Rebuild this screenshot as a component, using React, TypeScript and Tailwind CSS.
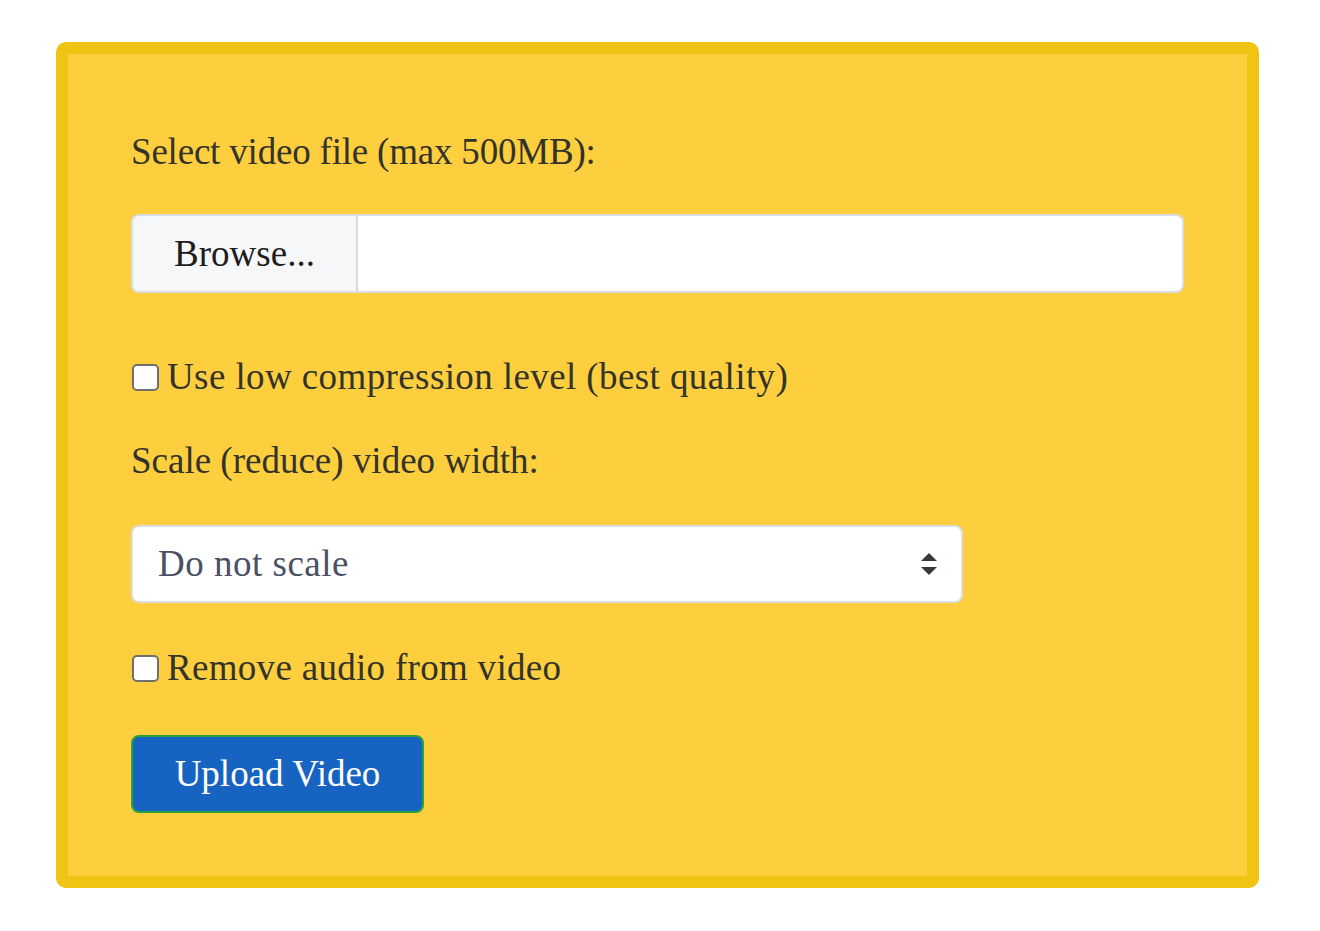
import { useState } from 'react'

function Check({ label }: { label: string }) {
  const [on, setOn] = useState(false)
  return (
    <label className="flex items-center h-[54px] cursor-pointer" onClick={() => setOn(!on)}>
      <span className="w-[27px] h-[27px] ml-[1px] mr-[8px] rounded-[5px] border-[2px] border-[#6f6f6f] bg-white flex items-center justify-center text-[18px] leading-none">
        {on ? '✓' : ''}
      </span>
      <span>{label}</span>
    </label>
  )
}

export default function App() {
  return (
    <div className="min-h-screen bg-white pt-[42px] pl-[56px]" style={{ fontFamily: '"Liberation Serif", serif' }}>
      <div className="w-[1203px] h-[846px] border-[12px] border-[#f1c413] bg-[#fdce3e] rounded-[10px] pl-[63px] pt-[71px] text-[37px] text-[#33332a]">
        <div className="leading-[54px] tracking-[-0.2px]">Select video file (max 500MB):</div>

        <div className="mt-[35px] w-[1053px] h-[79px] flex rounded-[8px] border-[2px] border-[#dadde2] bg-white overflow-hidden">
          <div className="w-[225px] h-full bg-[#f6f7f9] border-r-[2px] border-[#d6d9de] flex items-center justify-center text-[#1d1d1d]">
            Browse...
          </div>
          <div className="flex-1" />
        </div>

        <div className="mt-[57px] tracking-[0.4px]">
          <Check label="Use low compression level (best quality)" />
        </div>

        <div className="mt-[30px] leading-[54px]">Scale (reduce) video width:</div>

        <div className="mt-[37px] w-[832px] h-[78px] rounded-[8px] border-[2px] border-[#dadde2] bg-white flex items-center justify-between pl-[25px] pr-[24px] text-[#4b5063]">
          <span className="tracking-[0.5px]">Do not scale</span>
          <svg width="16" height="22" viewBox="0 0 16 22">
            <path d="M8 0 L16 8 L0 8 Z" fill="#343a40" />
            <path d="M0 14 L16 14 L8 22 Z" fill="#343a40" />
          </svg>
        </div>

        <div className="mt-[38px] tracking-[0.3px]">
          <Check label="Remove audio from video" />
        </div>

        <button className="mt-[40px] w-[293px] h-[78px] rounded-[8px] border-[2px] border-[#2aa13b] bg-[#1763c2] text-white text-[37px] flex items-center justify-center">
          Upload Video
        </button>
      </div>
    </div>
  )
}
